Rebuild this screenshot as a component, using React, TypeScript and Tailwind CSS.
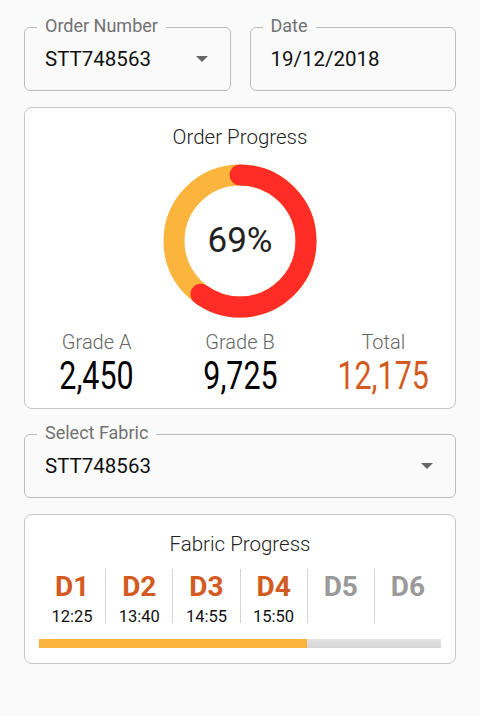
import React from 'react';

function Caret() {
  return (
    <svg width="12" height="6" viewBox="0 0 10 5" className="shrink-0">
      <path d="M0 0 L5 5 L10 0 Z" fill="#666" />
    </svg>
  );
}

function OutlinedField({ label, value, caret, className }: { label: string; value: string; caret?: boolean; className?: string }) {
  return (
    <div className={`relative h-[64px] rounded-md border-[1.5px] border-[#bdbdbd] flex items-center pl-[20px] pr-[22px] ${className ?? ''}`}>
      <span className="absolute -top-[13px] left-[12px] bg-[#fafafa] px-[8px] text-[18px] leading-[22px] text-[#727272]">{label}</span>
      <span className="flex-1 text-[20.5px] text-[#111] mt-[0px]">{value}</span>
      {caret && <Caret />}
    </div>
  );
}

function Donut({ pct }: { pct: number }) {
  const r = 66;
  const c = 2 * Math.PI * r;
  // drawn arc is a bit shorter than the value so the round caps land where the reference does
  const arc = 0.6;
  return (
    <div className="relative w-[156px] h-[156px]">
      <svg width="156" height="156" viewBox="0 0 156 156">
        <circle cx="78" cy="78" r={r} fill="none" stroke="#fbb43c" strokeWidth="21" />
        <circle
          cx="78"
          cy="78"
          r={r}
          fill="none"
          stroke="#ff2d26"
          strokeWidth="21"
          strokeLinecap="round"
          strokeDasharray={`${c * arc} ${c}`}
          transform="rotate(-90 78 78)"
        />
      </svg>
      <div className="absolute inset-0 flex items-center justify-center text-[35px] text-[#222]">{Math.round(pct * 100)}%</div>
    </div>
  );
}

const stats = [
  { label: 'Grade A', value: '2,450', color: 'text-black' },
  { label: 'Grade B', value: '9,725', color: 'text-black' },
  { label: 'Total', value: '12,175', color: 'text-[#d35a20]' },
];

const days = [
  { d: 'D1', t: '12:25', done: true },
  { d: 'D2', t: '13:40', done: true },
  { d: 'D3', t: '14:55', done: true },
  { d: 'D4', t: '15:50', done: true },
  { d: 'D5', t: '', done: false },
  { d: 'D6', t: '', done: false },
];

export default function App() {
  return (
    <div className="w-[480px] h-[716px] bg-[#fafafa] px-[24px] pt-[27px] font-['Roboto',sans-serif]">
      <div className="flex gap-[19px]">
        <OutlinedField label="Order Number" value="STT748563" caret className="flex-1" />
        <OutlinedField label="Date" value="19/12/2018" className="flex-1" />
      </div>

      <div className="mt-[16px] h-[302px] rounded-lg border-[1.5px] border-[#c6c6c6] bg-white flex flex-col items-center pt-[16px]">
        <div className="text-[20.5px] font-light text-[#222] leading-[26px]">Order Progress</div>
        <div className="mt-[13px]">
          <Donut pct={0.69} />
        </div>
        <div className="grid grid-cols-3 w-full mt-[10px]">
          {stats.map((s) => (
            <div key={s.label} className="flex flex-col items-center">
              <span className="text-[20px] font-light text-[#666] leading-[26px]">{s.label}</span>
              <span className={`inline-block text-[38px] leading-[42px] scale-x-[0.8] ${s.color}`}>{s.value}</span>
            </div>
          ))}
        </div>
      </div>

      <OutlinedField label="Select Fabric" value="STT748563" caret className="mt-[25px]" />

      <div className="mt-[16px] h-[150px] rounded-lg border-[1.5px] border-[#c6c6c6] bg-white flex flex-col items-center pt-[16px] px-[14px]">
        <div className="text-[20.5px] font-light text-[#222] leading-[26px]">Fabric Progress</div>
        <div className="flex w-full mt-[12px]">
          {days.map((x, i) => (
            <div key={x.d} className={`flex-1 flex flex-col items-center h-[54px] ${i < 5 ? 'border-r-[1.5px] border-[#d4d4d4]' : ''}`}>
              <span className={`text-[28px] font-bold leading-[36px] ${x.done ? 'text-[#d35a20]' : 'text-[#9a9a9a]'}`}>{x.d}</span>
              <span className="text-[16.5px] leading-[24px] text-[#111]">{x.t}</span>
            </div>
          ))}
        </div>
        <div className="w-full h-[9px] mt-[16px] bg-gradient-to-b from-[#e4e4e4] to-[#d4d4d4] flex">
          <div className="h-full bg-[#fbb43c]" style={{ width: `${(4 / 6) * 100}%` }} />
        </div>
      </div>
    </div>
  );
}
